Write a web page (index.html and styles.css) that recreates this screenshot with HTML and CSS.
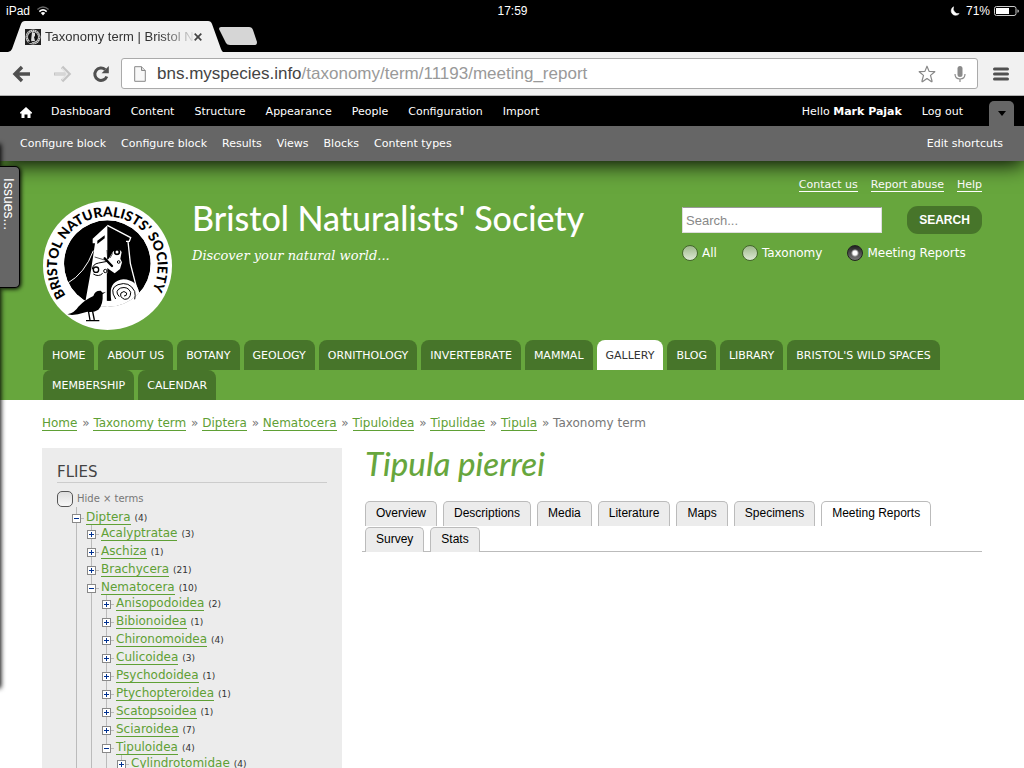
FILE: index.html
```html
<!DOCTYPE html>
<html lang="en">
<head>
<meta charset="utf-8">
<meta name="viewport" content="width=device-width, initial-scale=1">
<title>Taxonomy term | Bristol Naturalists' Society</title>
<link rel="stylesheet" href="styles.css">
</head>
<body>
<div class="status-bar">
  <span class="status-left">iPad
    <svg class="wifi" viewBox="0 0 12 9" width="14" height="10"><path d="M1 3.2Q6-1.2 11 3.2" fill="none" stroke="#666" stroke-width="1.3"/><path d="M2.7 5Q6 2 9.3 5" fill="none" stroke="#fff" stroke-width="1.5"/><path d="M4 6.3Q6 4.7 8 6.3L6 8.6z" fill="#fff"/></svg>
  </span>
  <span class="clock">17:59</span>
  <span class="status-right">
    <svg viewBox="0 0 10 10" width="10" height="10"><path d="M3.6.8A4.5 4.5 0 1 0 9.2 7.6 5 5 0 0 1 3.6.8z" fill="#fff" stroke="#fff" stroke-width=".6"/></svg>
    <span class="charge">71%</span>
    <svg viewBox="0 0 25 10" width="25" height="10"><rect x=".5" y=".5" width="21.500" height="9" rx="2" fill="none" stroke="#ccc"/><rect x="2" y="2" width="13" height="6" fill="#fff"/><path d="M23.500 3.200q1.300.4 1.300 1.800t-1.300 1.800z" fill="#ddd"/></svg>
  </span>
</div>

<div class="tab-strip">
  <div class="browser-tab">
    <svg class="tab-shape" viewBox="0 0 215 31" preserveAspectRatio="none"><path d="M0 31Q3 30.500 4 28L13 3Q14 0 17 0H200Q203 0 204 3L213 28Q214 30.500 215 31z" fill="#f1f1f1"/></svg>
    <svg class="favicon" viewBox="0 0 16 16" width="16" height="16"><rect width="16" height="16" fill="#222"/><circle cx="8" cy="8" r="7.500" fill="#ccc"/><circle cx="8" cy="8" r="6.300" fill="none" stroke="#555" stroke-width="1.200" stroke-dasharray="1 1"/><circle cx="8" cy="8" r="5" fill="#111"/><path d="M7 3l3 1v3L9 8l1 4H6z" fill="#ddd"/><path d="M3 14l3-3 1 3z" fill="#111"/></svg>
    <span class="tab-title">Taxonomy term | Bristol Naturalists</span>
    <button class="tab-close" aria-label="Close tab"><svg viewBox="0 0 8 8" width="8" height="8"><path d="M.7.7l6.600 6.600M7.300.7L.7 7.300" stroke="#444" stroke-width="1.700"/></svg></button>
  </div>
  <button class="new-tab" aria-label="New tab"><svg viewBox="0 0 38 18" width="38" height="18"><path d="M2 0H30Q33 0 34 3L38 15Q38 18 36 18H11Q8 18 7 16L0 2Q0 0 2 0z" fill="#d6d6d6"/></svg></button>
</div>

<div class="toolbar">
  <button class="tool" aria-label="Back"><svg viewBox="0 0 20 18" width="20" height="18"><path d="M10 2L3 9l7 7M3.500 9H18" fill="none" stroke="#505050" stroke-width="3.400"/></svg></button>
  <button class="tool" aria-label="Forward"><svg viewBox="0 0 20 18" width="20" height="18"><path d="M10 2l7 7-7 7M16.500 9H2" fill="none" stroke="#c4c4c4" stroke-width="3.200"/><path d="M10 3.500L15.500 9 10 14.500M15 9H3" fill="none" stroke="#e8e8e8" stroke-width="1.200"/></svg></button>
  <button class="tool" aria-label="Reload"><svg viewBox="0 0 18 18" width="18" height="18"><path d="M14.800 11.500A6.200 6.200 0 1 1 13.200 4.600" fill="none" stroke="#505050" stroke-width="3"/><path d="M16.800 1v7.200H9.600z" fill="#505050"/></svg></button>
  <div class="omnibox">
    <svg viewBox="0 0 12 16" width="12" height="16"><path d="M.7.7H7.500L11.300 4.500V15.300H.7z" fill="#f8f8f8" stroke="#888"/><path d="M7.500.7V4.500H11.300" fill="#ddd" stroke="#888"/></svg>
    <div class="url" role="textbox" aria-label="Address"><span class="host">bns.myspecies.info</span>/taxonomy/term/11193/meeting_report</div>
    <svg viewBox="0 0 18 18" width="18" height="18"><path d="M9 1.200l2.100 5.200 5.700.3-4.300 3.700 1.500 5.600q.2 1-.8.600L9 13.600l-4.200 3q-1 .4-.8-.6l1.500-5.600L1.200 6.700l5.700-.3z" fill="none" stroke="#888" stroke-width="1.200" stroke-linejoin="round"/></svg>
    <svg class="mic" viewBox="0 0 12 18" width="12" height="18"><rect x="3.500" y="1" width="5" height="11" rx="2.500" fill="#8a8a8a"/><path d="M1 9Q1 14 6 14T11 9M6 14v3" fill="none" stroke="#8a8a8a" stroke-width="1.200"/></svg>
  </div>
  <button class="tool" aria-label="Menu"><svg viewBox="0 0 16 14" width="16" height="14"><path d="M1.500 2h13M1.500 7h13M1.500 12h13" stroke="#505050" stroke-width="3" stroke-linecap="round"/></svg></button>
</div>

<div class="admin">
  <nav class="admin-menu">
    <a class="home" href="#" aria-label="Home"><svg viewBox="0 0 12 11" width="12" height="11"><path d="M6 0l6 5.500V6.500H10.500V11H7.500V7.500H4.500V11H1.500V6.500H0V5.500z" fill="#fff"/></svg></a>
    <a href="#">Dashboard</a><a href="#">Content</a><a href="#">Structure</a><a href="#">Appearance</a><a href="#">People</a><a href="#">Configuration</a><a href="#">Import</a>
    <a class="hello" href="#">Hello <strong>Mark Pajak</strong></a><a href="#">Log out</a>
    <button class="drawer-toggle" aria-label="Hide shortcuts"><svg viewBox="0 0 8 5" width="8" height="5"><path d="M0 0h8L4 5z" fill="#000"/></svg></button>
  </nav>
  <nav class="shortcuts">
    <a href="#">Configure block</a><a href="#">Configure block</a><a href="#">Results</a><a href="#">Views</a><a href="#">Blocks</a><a href="#">Content types</a><a class="edit" href="#">Edit shortcuts</a>
  </nav>
</div>

<header class="site-header">
  <div class="masthead">
    <svg class="logo" viewBox="39 33 387 387" role="img" aria-label="Bristol Naturalists' Society logo">
      <defs><path id="ring" d="M108 317A151 151 0 1 1 356 317"/><clipPath id="disc"><circle cx="232" cy="221" r="130"/></clipPath></defs>
      <circle cx="232.500" cy="226.500" r="193.500" fill="#fff"/>
      <g clip-path="url(#disc)">
        <circle cx="232" cy="221" r="130" fill="#000"/>
        <path d="M232 106L188 146V160H195L184 235L166 335H232z" fill="#fff"/>
        <path d="M202 152l22-16v9l-22 17z" fill="#000"/>
        <path d="M232 106l70 37-4 11h-10M294 154l7 66 27 106" fill="none" stroke="#fff" stroke-width="4"/>
        <path d="M190 182Q165 250 112 280" fill="none" stroke="#fff" stroke-width="3"/>
        <path d="M80 332H231V332H244Q232 274 280 268Q322 270 328 310L380 330V380H80z" fill="#fff"/>
        <path d="M236 250v82" stroke="#000" stroke-width="11"/>
      </g>
      <path d="M236 206L250 184Q268 172 275 186L271 206L276 217L270 237L254 250L240 240L232 234L212 257Q190 260 187 244Q187 222 206 219z" fill="#fff"/>
      <g fill="none" stroke="#000"><circle cx="261" cy="186" r="7" stroke-width="5"/><circle cx="198" cy="239" r="8" stroke-width="4"/><circle cx="266" cy="216" r="4" stroke-width="3"/><circle cx="226" cy="243" r="5" stroke-width="3"/><path d="M187 238Q188 222 206 219L232 214M190 252Q206 262 218 250" stroke-width="3"/><path d="M194 201l30 9M231 180l2 28M248 190l-8 14" stroke-width="2"/></g>
      <path d="M224 205l22 23" stroke="#000" stroke-width="7" stroke-linecap="round"/>
      <g fill="none" stroke="#000" stroke-width="3"><path d="M257 327Q236 295 264 284Q298 272 314 304Q317 317 314 328"/><path d="M268 320Q252 303 272 294Q294 288 302 307Q302 328 284 328Q268 322 273 309Q282 300 290 309Q291 319 282 318"/></g>
      <path d="M112 373Q135 367 145 350Q164 330 190 318Q195 301 212 302L218 308L228 305L218 313Q220 345 205 359Q190 369 172 365L144 373L126 375z" fill="#000"/>
      <path d="M175 362l5 28M187 360l6 30M168 392h40" fill="none" stroke="#000" stroke-width="4"/>
      <text class="ring-text"><textPath href="#ring">BRISTOL NATURALISTS' SOCIETY</textPath></text>
    </svg>
    <div class="branding">
      <h1 class="site-name">Bristol Naturalists' Society</h1>
      <p class="slogan">Discover your natural world...</p>
    </div>
    <div class="header-tools">
      <nav class="utility"><a href="#">Contact us</a><a href="#">Report abuse</a><a href="#">Help</a></nav>
      <form class="search">
        <div class="search-row">
          <input class="search-box" type="text" placeholder="Search..." aria-label="Search">
          <button class="search-button" type="button">SEARCH</button>
        </div>
        <div class="scopes">
          <label><input type="radio" name="scope">All</label>
          <label><input type="radio" name="scope">Taxonomy</label>
          <label><input type="radio" name="scope" checked>Meeting Reports</label>
        </div>
      </form>
    </div>
  </div>
  <nav class="main-menu">
    <a href="#">HOME</a><a href="#">ABOUT US</a><a href="#">BOTANY</a><a href="#">GEOLOGY</a><a href="#">ORNITHOLOGY</a><a href="#">INVERTEBRATE</a><a href="#">MAMMAL</a><a class="active" href="#">GALLERY</a><a href="#">BLOG</a><a href="#">LIBRARY</a><a href="#">BRISTOL'S WILD SPACES</a><a href="#">MEMBERSHIP</a><a href="#">CALENDAR</a>
  </nav>
</header>

<div class="page">
  <nav class="breadcrumb" aria-label="Breadcrumb"><a href="#">Home</a> » <a href="#">Taxonomy term</a> » <a href="#">Diptera</a> » <a href="#">Nematocera</a> » <a href="#">Tipuloidea</a> » <a href="#">Tipulidae</a> » <a href="#">Tipula</a> » Taxonomy term</nav>
  <div class="columns">
    <aside class="sidebar">
      <h2 class="block-title">FLIES</h2>
      <label class="hide-terms"><input type="checkbox">Hide × terms</label>
      <ul class="tree">
        <li><div class="term"><button class="toggle open" aria-label="Collapse"></button><a href="#">Diptera</a><small>(4)</small></div>
          <ul>
            <li><div class="term"><button class="toggle" aria-label="Expand"></button><a href="#">Acalyptratae</a><small>(3)</small></div></li>
            <li><div class="term"><button class="toggle" aria-label="Expand"></button><a href="#">Aschiza</a><small>(1)</small></div></li>
            <li><div class="term"><button class="toggle" aria-label="Expand"></button><a href="#">Brachycera</a><small>(21)</small></div></li>
            <li><div class="term"><button class="toggle open" aria-label="Collapse"></button><a href="#">Nematocera</a><small>(10)</small></div>
              <ul>
                <li><div class="term"><button class="toggle" aria-label="Expand"></button><a href="#">Anisopodoidea</a><small>(2)</small></div></li>
                <li><div class="term"><button class="toggle" aria-label="Expand"></button><a href="#">Bibionoidea</a><small>(1)</small></div></li>
                <li><div class="term"><button class="toggle" aria-label="Expand"></button><a href="#">Chironomoidea</a><small>(4)</small></div></li>
                <li><div class="term"><button class="toggle" aria-label="Expand"></button><a href="#">Culicoidea</a><small>(3)</small></div></li>
                <li><div class="term"><button class="toggle" aria-label="Expand"></button><a href="#">Psychodoidea</a><small>(1)</small></div></li>
                <li><div class="term"><button class="toggle" aria-label="Expand"></button><a href="#">Ptychopteroidea</a><small>(1)</small></div></li>
                <li><div class="term"><button class="toggle" aria-label="Expand"></button><a href="#">Scatopsoidea</a><small>(1)</small></div></li>
                <li><div class="term"><button class="toggle" aria-label="Expand"></button><a href="#">Sciaroidea</a><small>(7)</small></div></li>
                <li><div class="term"><button class="toggle open" aria-label="Collapse"></button><a href="#">Tipuloidea</a><small>(4)</small></div>
                  <ul>
                    <li><div class="term"><button class="toggle" aria-label="Expand"></button><a href="#">Cylindrotomidae</a><small>(4)</small></div></li>
                  </ul>
                </li>
              </ul>
            </li>
          </ul>
        </li>
      </ul>
    </aside>
    <main class="content">
      <h2 class="term-title">Tipula pierrei</h2>
      <nav class="tabs"><a href="#">Overview</a><a href="#">Descriptions</a><a href="#">Media</a><a href="#">Literature</a><a href="#">Maps</a><a href="#">Specimens</a><a class="active" href="#">Meeting Reports</a><a href="#">Survey</a><a href="#">Stats</a></nav>
    </main>
  </div>
</div>

<div class="drawer-edge"></div>
<button class="issues">Issues...</button>
</body>
</html>
```
FILE: styles.css
```css
* { box-sizing: border-box; }

body {
  margin: 0;
  height: 100vh;
  overflow: hidden;
  position: relative;
  background: #fff;
  color: #777;
  font: 12px/18px "DejaVu Sans", Verdana, sans-serif;
}

button { padding: 0; border: 0; background: none; font: inherit; color: inherit; cursor: pointer; }
svg { display: block; flex: none; }
ul { list-style: none; margin: 0; padding: 0; }
h1, h2, p { margin: 0; }

/* device status bar */
.status-bar {
  display: grid;
  grid-template-columns: 1fr auto 1fr;
  align-items: center;
  height: 21px;
  padding: 0 5px 0 6px;
  background: #000;
  color: #fff;
  font: 12px/20px "Liberation Sans", Arial, sans-serif;
}
.status-left, .status-right { display: flex; align-items: center; gap: 6px; }
.status-right { justify-content: flex-end; }
.charge { margin-right: -2px; }

/* browser chrome */
.tab-strip { display: flex; align-items: flex-start; height: 31px; padding-left: 8px; background: #000; }
.browser-tab {
  position: relative;
  display: flex;
  align-items: center;
  width: 215px;
  height: 31px;
  padding: 0 21px 0 17px;
  color: #333;
  font: 13px/16px "Liberation Sans", Arial, sans-serif;
}
.tab-shape { position: absolute; inset: 0; width: 100%; height: 100%; }
.favicon, .tab-title, .tab-close { position: relative; }
.tab-title {
  flex: 1;
  margin-left: 4px;
  overflow: hidden;
  white-space: nowrap;
  -webkit-mask-image: linear-gradient(90deg, #000 115px, transparent 152px);
  mask-image: linear-gradient(90deg, #000 115px, transparent 152px);
}
.new-tab { margin: 6px 0 0 -4px; }

.toolbar {
  position: relative;
  z-index: 3;
  display: flex;
  align-items: center;
  gap: 20px;
  height: 44px;
  padding: 0 15px 0 12px;
  background: #f1f1f1;
  border-bottom: 1px solid #b0b0b0;
}
.omnibox {
  flex: 1;
  display: flex;
  align-items: center;
  height: 31px;
  margin: 0 -5px 0 -9px;
  padding: 0 11px 0 12px;
  border: 1px solid #aaa;
  border-radius: 3px;
  background: #fff;
}
.url {
  flex: 1;
  margin-left: 11px;
  color: #999;
  font: 17px/20px "Liberation Sans", Arial, sans-serif;
}
.host { color: #444; }
.mic { margin-left: 18px; }

/* administration bar */
.admin {
  position: relative;
  z-index: 2;
  color: #fff;
  font-size: 11px;
  box-shadow: 0 3px 20px #000;
}
.admin a { color: inherit; text-decoration: none; }
.admin-menu {
  display: flex;
  align-items: center;
  gap: 20px;
  height: 30px;
  padding: 2px 10px 0 20px;
  background: #000;
}
.admin-menu .home { margin-right: -1px; }
.hello { margin-left: auto; }
.drawer-toggle {
  display: grid;
  place-items: center;
  align-self: flex-end;
  width: 25px;
  height: 25px;
  margin-left: 6px;
  border-radius: 5px 5px 0 0;
  background: #666;
}
.shortcuts {
  display: flex;
  align-items: center;
  gap: 15px;
  height: 35px;
  padding: 0 21px 0 20px;
  background: #666;
}
.edit { margin-left: auto; }

/* site header */
.site-header { padding: 15px 42px 0; background: #67a63d; color: #fff; }
.masthead { display: flex; align-items: flex-start; height: 164px; }
.logo { width: 129px; height: 129px; margin: 25px 20px 0 1px; }
.ring-text { font: 900 41px Lato, sans-serif; fill: #000; }
.branding { flex: 1; padding-top: 20px; }
.site-name { font: 500 34px/44px Lato, sans-serif; white-space: nowrap; }
.slogan { margin-top: 7px; font: italic 13px/18px "DejaVu Serif", Georgia, serif; }
.header-tools { width: 300px; }
.utility { display: flex; justify-content: flex-end; gap: 13px; padding-top: 3px; font-size: 11px; line-height: 12px; }
.utility a { color: #fff; text-decoration: none; border-bottom: 1px solid #fff; }
.search-row { display: flex; align-items: center; justify-content: space-between; margin-top: 14px; }
.search-box {
  width: 200px;
  height: 26px;
  padding: 0 3px;
  border: 1px solid #ddd;
  border-top-color: #999;
  border-radius: 0;
  font: 13px "Liberation Sans", Arial, sans-serif;
}
.search-box::placeholder { color: #888; }
.search-button {
  width: 75px;
  height: 28px;
  border-radius: 11px;
  background: #47752a;
  color: #fff;
  font: bold 12px "Liberation Sans", Arial, sans-serif;
}
.scopes { display: flex; gap: 25px; margin-top: 10px; }
.scopes label { display: flex; align-items: center; gap: 4px; }
.scopes input {
  appearance: none;
  width: 16px;
  height: 16px;
  margin: 0;
  border: 1px solid #44662c;
  border-radius: 50%;
  background: linear-gradient(#9db88b, #dce8d3);
}
.scopes input:checked {
  border-color: #222;
  background: radial-gradient(circle, #fff 2px, transparent 4px), linear-gradient(#222, #777);
}

.main-menu { display: flex; flex-wrap: wrap; gap: 0 4px; padding-left: 1px; font-size: 11px; line-height: 32px; }
.main-menu a {
  height: 30px;
  padding: 0 9px;
  border-radius: 8px 8px 0 0;
  background: #47752a;
  color: #fff;
  text-decoration: none;
}
.main-menu .active { background: #fff; color: #333; }

/* page body */
.page { padding: 14px 42px 0; }
.page a { color: #5fa035; text-decoration: none; }
.breadcrumb a { margin-right: 1px; border-bottom: 1px solid #5fa035; }
.columns { display: flex; gap: 20px; margin-top: 16px; }
.sidebar { width: 300px; padding: 12px 15px; background: #ececec; }
.block-title {
  padding-top: 2px;
  border-bottom: 1px solid #ccc;
  color: #444;
  font-size: 15px;
  font-weight: normal;
  line-height: 20px;
}
.hide-terms { display: flex; align-items: center; gap: 4px; margin-top: 8px; font-size: 10px; line-height: 16px; }
.hide-terms input {
  appearance: none;
  width: 16px;
  height: 16px;
  margin: 0;
  border: 1px solid #555;
  border-radius: 5px;
  background: linear-gradient(#ddd, #f8f8f8);
}

.tree ul, .tree { border-left: 1px solid #bbb; }
.tree { margin-left: 19px; padding-top: 2px; }
.tree ul { margin: -2px 0 0 14px; }
.term { display: flex; align-items: center; height: 18px; margin-left: -5px; }
.toggle {
  flex: none;
  width: 9px;
  height: 9px;
  border: 1px solid #888;
  background:
    linear-gradient(#003090, #003090) center / 5px 1px no-repeat,
    linear-gradient(#003090, #003090) center / 1px 5px no-repeat,
    #fff;
}
.toggle.open { background: linear-gradient(#003090, #003090) center / 5px 1px no-repeat, #fff; }
.toggle::after { content: ""; display: block; width: 3px; height: 1px; margin-left: 8px; background: #bbb; }
.toggle + a { margin: 0 0 2px 5px; border-bottom: 1px solid #5fa035; line-height: 14px; }
.term small { margin-left: 4px; color: #333; font-size: 9px; }

.content { flex: 1; min-width: 0; }
.term-title {
  margin: -7px 0 16px 3px;
  color: #67a63d;
  font: italic 500 33px/44px Lato, sans-serif;
}
.tabs {
  display: flex;
  flex-wrap: wrap;
  gap: 2px 6px;
  padding-left: 3px;
  border-bottom: 1px solid #bbb;
  font: 12px/23px "Liberation Sans", Arial, sans-serif;
}
.tabs a {
  height: 25px;
  margin-bottom: -1px;
  padding: 0 10px;
  border: 1px solid #bbb;
  border-bottom: 0;
  border-radius: 5px 5px 0 0;
  background: #ececec;
  color: #000;
}
.tabs .active { background: #fff; }

/* side drawer, mostly off screen */
.drawer-edge {
  position: absolute;
  z-index: 3;
  top: 145px;
  left: -10px;
  width: 10px;
  height: 542px;
  box-shadow: 0 0 5px 1px #000;
}
.issues {
  position: absolute;
  z-index: 4;
  top: 166px;
  left: 0;
  width: 20px;
  height: 122px;
  padding: 11px 2px 0 0;
  border: 1px solid #000;
  border-left: 0;
  border-radius: 0 5px 5px 0;
  background: #666;
  box-shadow: 1px 1px 4px #000;
  color: #fff;
  font: 14px/16px "Liberation Sans", Arial, sans-serif;
  text-align: start;
  writing-mode: vertical-rl;
}
```
